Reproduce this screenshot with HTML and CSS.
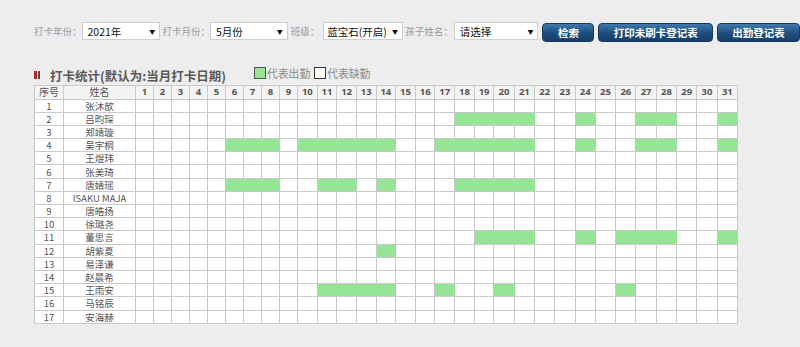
FILE: index.html
```html
<!DOCTYPE html>
<html lang="zh-CN">
<head>
<meta charset="utf-8">
<title>打卡统计</title>
<link rel="stylesheet" href="styles.css">
</head>
<body>
<div class="page">
  <div class="toolbar">
    <span class="lbl">打卡年份：</span>
    <div class="sel sel-year"><span>2021年</span><span class="arr">▼</span></div>
    <span class="lbl">打卡月份：</span>
    <div class="sel sel-month"><span>5月份</span><span class="arr">▼</span></div>
    <span class="lbl lbl-class">班级：</span>
    <div class="sel sel-class"><span>蓝宝石(开启)</span><span class="arr">▼</span></div>
    <span class="lbl">孩子姓名：</span>
    <div class="sel sel-child"><span>请选择</span><span class="arr">▼</span></div>
    <button class="btn btn-search">检索</button>
    <button class="btn btn-print">打印未刷卡登记表</button>
    <button class="btn btn-sheet">出勤登记表</button>
  </div>

  <div class="stats-head">
    <span class="mark"><i class="mark-red"></i><i class="mark-dark"></i></span>
    <span class="title">打卡统计(默认为:当月打卡日期)</span>
    <span class="legend-box on"></span><span class="legend-text">代表出勤</span>
    <span class="legend-box off"></span><span class="legend-text">代表缺勤</span>
  </div>

  <table class="grid">
    <colgroup>
      <col class="c-no"><col class="c-name">
      <col class="c-s"><col class="c-s"><col class="c-s"><col class="c-s"><col class="c-s"><col class="c-s"><col class="c-s"><col class="c-s"><col class="c-s">
      <col class="c-t"><col class="c-t"><col class="c-t"><col class="c-t"><col class="c-t"><col class="c-t"><col class="c-t"><col class="c-t"><col class="c-t"><col class="c-t">
      <col class="c-d"><col class="c-d"><col class="c-d"><col class="c-d"><col class="c-d"><col class="c-d"><col class="c-d"><col class="c-d"><col class="c-d"><col class="c-d"><col class="c-d"><col class="c-d">
    </colgroup>
    <thead>
      <tr>
        <th>序号</th><th>姓名</th>
        <th class="d">1</th><th class="d">2</th><th class="d">3</th><th class="d">4</th><th class="d">5</th><th class="d">6</th><th class="d">7</th><th class="d">8</th><th class="d">9</th><th class="d">10</th>
        <th class="d">11</th><th class="d">12</th><th class="d">13</th><th class="d">14</th><th class="d">15</th><th class="d">16</th><th class="d">17</th><th class="d">18</th><th class="d">19</th><th class="d">20</th>
        <th class="d">21</th><th class="d">22</th><th class="d">23</th><th class="d">24</th><th class="d">25</th><th class="d">26</th><th class="d">27</th><th class="d">28</th><th class="d">29</th><th class="d">30</th><th class="d">31</th>
      </tr>
    </thead>
    <tbody>
      <tr><td>1</td><td>张沐歆</td>
        <td></td><td></td><td></td><td></td><td></td> <td></td><td></td><td></td><td></td><td></td> <td></td><td></td><td></td><td></td><td></td> <td></td><td></td><td></td><td></td><td></td> <td></td><td></td><td></td><td></td><td></td> <td></td><td></td><td></td><td></td><td></td> <td></td></tr>
      <tr><td>2</td><td>吕昀琛</td>
        <td></td><td></td><td></td><td></td><td></td> <td></td><td></td><td></td><td></td><td></td> <td></td><td></td><td></td><td></td><td></td> <td></td><td></td><td class="g"></td><td class="g"></td><td class="g"></td> <td class="g"></td><td></td><td></td><td class="g"></td><td></td> <td></td><td class="g"></td><td class="g"></td><td></td><td></td> <td class="g"></td></tr>
      <tr><td>3</td><td>郑靖璇</td>
        <td></td><td></td><td></td><td></td><td></td> <td></td><td></td><td></td><td></td><td></td> <td></td><td></td><td></td><td></td><td></td> <td></td><td></td><td></td><td></td><td></td> <td></td><td></td><td></td><td></td><td></td> <td></td><td></td><td></td><td></td><td></td> <td></td></tr>
      <tr><td>4</td><td>吴宇桐</td>
        <td></td><td></td><td></td><td></td><td></td> <td class="g"></td><td class="g"></td><td class="g"></td><td></td><td class="g"></td> <td class="g"></td><td class="g"></td><td class="g"></td><td class="g"></td><td></td> <td></td><td class="g"></td><td class="g"></td><td class="g"></td><td class="g"></td> <td class="g"></td><td></td><td></td><td class="g"></td><td></td> <td></td><td class="g"></td><td class="g"></td><td></td><td></td> <td class="g"></td></tr>
      <tr><td>5</td><td>王煜玮</td>
        <td></td><td></td><td></td><td></td><td></td> <td></td><td></td><td></td><td></td><td></td> <td></td><td></td><td></td><td></td><td></td> <td></td><td></td><td></td><td></td><td></td> <td></td><td></td><td></td><td></td><td></td> <td></td><td></td><td></td><td></td><td></td> <td></td></tr>
      <tr><td>6</td><td>张美琦</td>
        <td></td><td></td><td></td><td></td><td></td> <td></td><td></td><td></td><td></td><td></td> <td></td><td></td><td></td><td></td><td></td> <td></td><td></td><td></td><td></td><td></td> <td></td><td></td><td></td><td></td><td></td> <td></td><td></td><td></td><td></td><td></td> <td></td></tr>
      <tr><td>7</td><td>唐婧瑶</td>
        <td></td><td></td><td></td><td></td><td></td> <td class="g"></td><td class="g"></td><td class="g"></td><td></td><td></td> <td class="g"></td><td class="g"></td><td></td><td class="g"></td><td></td> <td></td><td></td><td class="g"></td><td class="g"></td><td class="g"></td> <td class="g"></td><td></td><td></td><td></td><td></td> <td></td><td></td><td></td><td></td><td></td> <td></td></tr>
      <tr><td>8</td><td>ISAKU MAJA</td>
        <td></td><td></td><td></td><td></td><td></td> <td></td><td></td><td></td><td></td><td></td> <td></td><td></td><td></td><td></td><td></td> <td></td><td></td><td></td><td></td><td></td> <td></td><td></td><td></td><td></td><td></td> <td></td><td></td><td></td><td></td><td></td> <td></td></tr>
      <tr><td>9</td><td>唐皓扬</td>
        <td></td><td></td><td></td><td></td><td></td> <td></td><td></td><td></td><td></td><td></td> <td></td><td></td><td></td><td></td><td></td> <td></td><td></td><td></td><td></td><td></td> <td></td><td></td><td></td><td></td><td></td> <td></td><td></td><td></td><td></td><td></td> <td></td></tr>
      <tr><td>10</td><td>徐璐尧</td>
        <td></td><td></td><td></td><td></td><td></td> <td></td><td></td><td></td><td></td><td></td> <td></td><td></td><td></td><td></td><td></td> <td></td><td></td><td></td><td></td><td></td> <td></td><td></td><td></td><td></td><td></td> <td></td><td></td><td></td><td></td><td></td> <td></td></tr>
      <tr><td>11</td><td>董思言</td>
        <td></td><td></td><td></td><td></td><td></td> <td></td><td></td><td></td><td></td><td></td> <td></td><td></td><td></td><td></td><td></td> <td></td><td></td><td></td><td class="g"></td><td class="g"></td> <td class="g"></td><td></td><td></td><td class="g"></td><td></td> <td class="g"></td><td class="g"></td><td class="g"></td><td></td><td></td> <td class="g"></td></tr>
      <tr><td>12</td><td>胡紫夏</td>
        <td></td><td></td><td></td><td></td><td></td> <td></td><td></td><td></td><td></td><td></td> <td></td><td></td><td></td><td class="g"></td><td></td> <td></td><td></td><td></td><td></td><td></td> <td></td><td></td><td></td><td></td><td></td> <td></td><td></td><td></td><td></td><td></td> <td></td></tr>
      <tr><td>13</td><td>易泽谦</td>
        <td></td><td></td><td></td><td></td><td></td> <td></td><td></td><td></td><td></td><td></td> <td></td><td></td><td></td><td></td><td></td> <td></td><td></td><td></td><td></td><td></td> <td></td><td></td><td></td><td></td><td></td> <td></td><td></td><td></td><td></td><td></td> <td></td></tr>
      <tr><td>14</td><td>赵晨希</td>
        <td></td><td></td><td></td><td></td><td></td> <td></td><td></td><td></td><td></td><td></td> <td></td><td></td><td></td><td></td><td></td> <td></td><td></td><td></td><td></td><td></td> <td></td><td></td><td></td><td></td><td></td> <td></td><td></td><td></td><td></td><td></td> <td></td></tr>
      <tr><td>15</td><td>王雨安</td>
        <td></td><td></td><td></td><td></td><td></td> <td></td><td></td><td></td><td></td><td></td> <td class="g"></td><td class="g"></td><td class="g"></td><td class="g"></td><td></td> <td></td><td class="g"></td><td></td><td></td><td class="g"></td> <td></td><td></td><td></td><td></td><td></td> <td class="g"></td><td></td><td></td><td></td><td></td> <td></td></tr>
      <tr><td>16</td><td>马铭辰</td>
        <td></td><td></td><td></td><td></td><td></td> <td></td><td></td><td></td><td></td><td></td> <td></td><td></td><td></td><td></td><td></td> <td></td><td></td><td></td><td></td><td></td> <td></td><td></td><td></td><td></td><td></td> <td></td><td></td><td></td><td></td><td></td> <td></td></tr>
      <tr><td>17</td><td>安海赫</td>
        <td></td><td></td><td></td><td></td><td></td> <td></td><td></td><td></td><td></td><td></td> <td></td><td></td><td></td><td></td><td></td> <td></td><td></td><td></td><td></td><td></td> <td></td><td></td><td></td><td></td><td></td> <td></td><td></td><td></td><td></td><td></td> <td></td></tr>
    </tbody>
  </table>
</div>
</body>
</html>
```
FILE: styles.css
```css
html, body {
  margin: 0;
  background: #ededed;
  font-family: "Noto Sans CJK SC", "Noto Sans", sans-serif;
}

.page {
  padding: 22px 0 0 34px;
}

/* ---------- toolbar ---------- */
.toolbar {
  display: flex;
  align-items: flex-start;
  height: 20px;
}

.lbl {
  font-size: 9.5px;
  line-height: 18px;
  color: #9a9a9a;
  margin-left: 2px;
  white-space: nowrap;
}
.lbl:first-child { margin-left: 0; }
.lbl-class { margin-left: 3px; margin-right: 4px; }

.sel {
  box-sizing: border-box;
  height: 18px;
  background: #fff;
  border: 1px solid #cfcfcf;
  display: flex;
  align-items: center;
  justify-content: space-between;
  padding: 0 4px 0 5px;
  font-size: 10.5px;
  color: #111;
  white-space: nowrap;
}
.sel .arr { font-size: 6px; color: #111; }
.sel-year { width: 79px; }
.sel-month { width: 78px; }
.sel-class { width: 80px; padding-left: 3px; }
.sel-child { width: 85px; margin-left: 1px; }

.btn {
  box-sizing: border-box;
  height: 19px;
  margin: 1px 0 0 4px;
  padding: 0;
  border: 1px solid #143a60;
  border-radius: 4px;
  background: linear-gradient(#4079ad, #1d4d7e 55%, #173f69);
  color: #fff;
  font-family: "Noto Sans CJK SC", sans-serif;
  font-size: 10.5px;
  font-weight: bold;
  line-height: 17px;
  text-align: center;
  white-space: nowrap;
}
.btn-search { width: 52px; }
.btn-print { width: 115px; }
.btn-sheet { width: 83px; }

/* ---------- stats header ---------- */
.stats-head {
  display: flex;
  align-items: flex-start;
  height: 16px;
  margin-top: 25px;
}

.mark {
  display: flex;
  gap: 1px;
  margin-top: 4px;
}
.mark i { display: block; height: 8px; }
.mark-red { width: 3px; background: #b8262a; }
.mark-dark { width: 2px; background: #4a4a4a; }

.title {
  margin-left: 10px;
  font-size: 12.5px;
  font-weight: bold;
  line-height: 16px;
  padding-top: 1px;
  color: #5a5a5a;
  white-space: nowrap;
}

.legend-box {
  box-sizing: border-box;
  width: 12px;
  height: 12px;
  border: 1px solid #555;
}
.legend-box.on { background: #96e496; margin-left: 28px; }
.legend-box.off { background: #fff; margin-left: 4px; border-color: #333; }

.legend-text {
  font-size: 10.8px;
  line-height: 13px;
  color: #8a8a8a;
  margin-left: 1px;
  white-space: nowrap;
}

/* ---------- grid ---------- */
.grid {
  margin-top: 2px;
  border-collapse: separate;
  border-spacing: 0;
  table-layout: fixed;
  width: 704px;
  background: #fff;
  border-top: 1px solid #c9c9c9;
  border-left: 1px solid #c9c9c9;
}

.c-no { width: 29px; }
.c-name { width: 72px; }
.c-s { width: 18px; }
.c-t { width: 19.65px; }
.c-d { width: 20.3px; }

.grid th,
.grid td {
  box-sizing: border-box;
  padding: 0;
  border-right: 1px solid #c9c9c9;
  border-bottom: 1px solid #c9c9c9;
  text-align: center;
  white-space: nowrap;
}

.grid thead tr { height: 13.5px; }
.grid tbody tr { height: 13.2px; }

.grid th {
  background: #f4f4f4;
  font-size: 10px;
  line-height: 12px;
  font-weight: normal;
  color: #555;
}
.grid th.d {
  font-family: "Noto Sans", sans-serif;
  font-weight: bold;
  font-size: 9.5px;
}

.grid td {
  font-size: 9.5px;
  line-height: 12px;
  color: #555;
}

.grid td.g {
  background: #96e496;
  border-right-color: #96e496;
}
```
